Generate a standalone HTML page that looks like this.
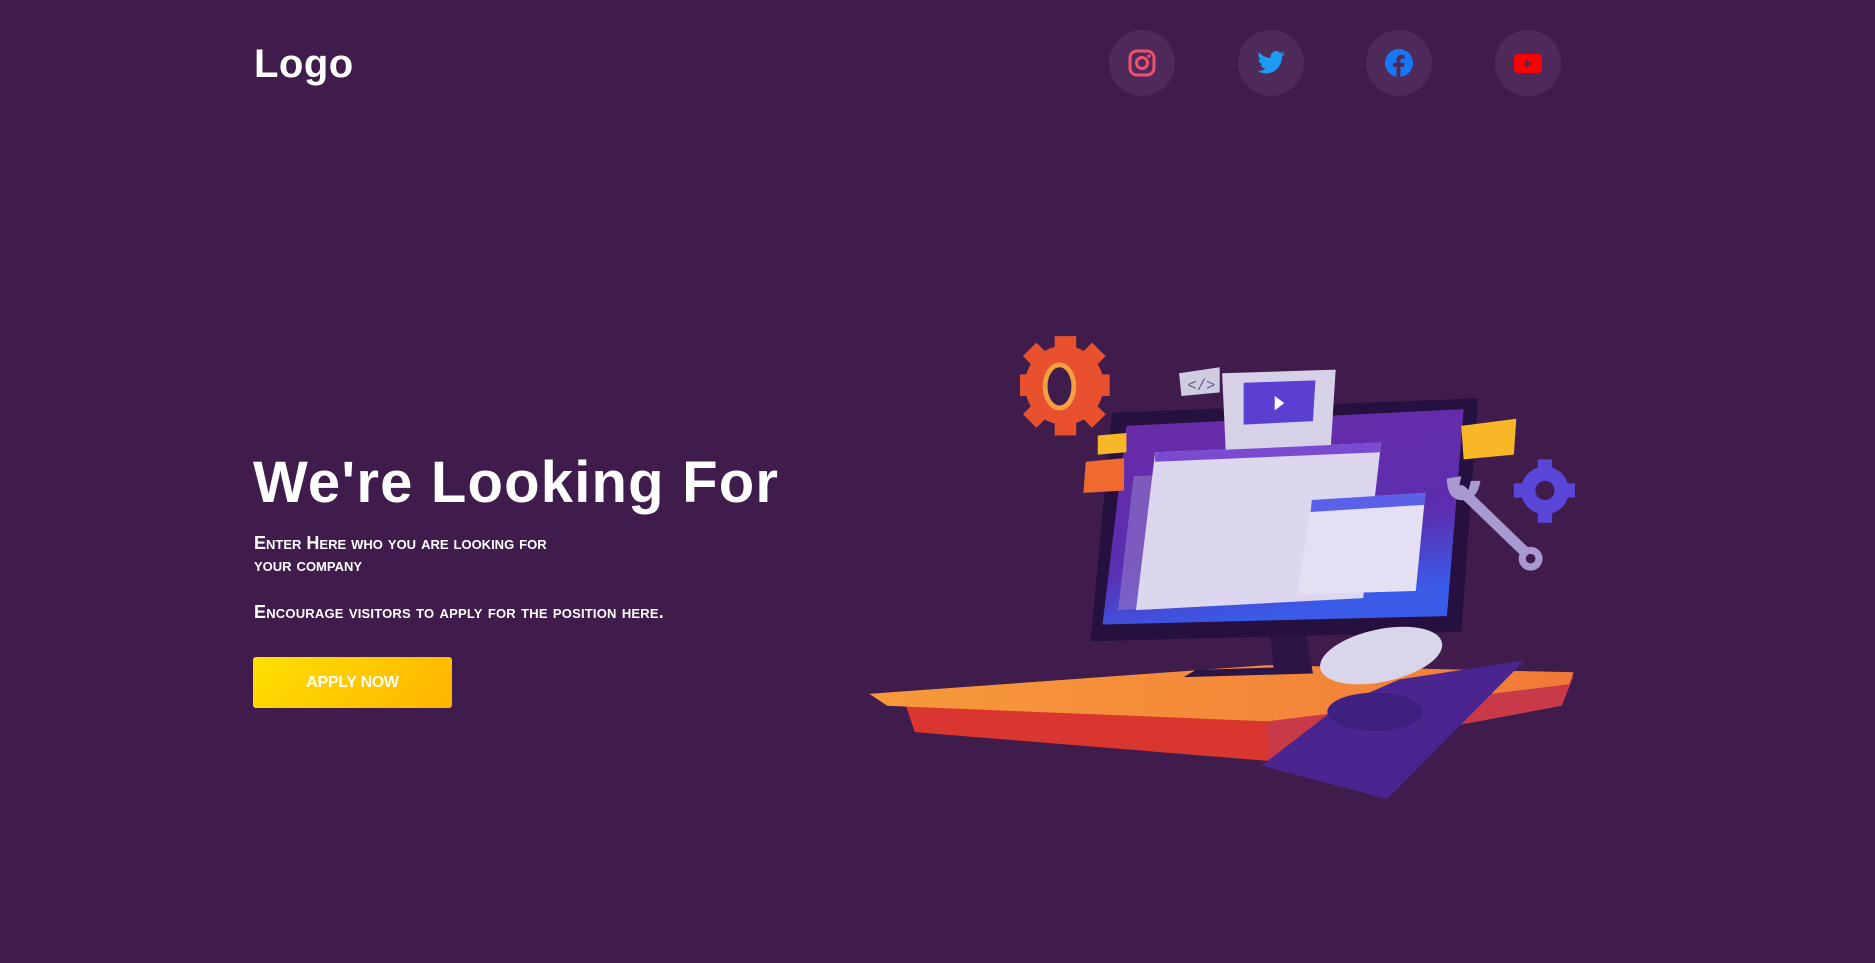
<!DOCTYPE html>
<html><head><meta charset="utf-8"><style>
html,body{margin:0;padding:0;width:1875px;height:963px;overflow:hidden;background:#3f1c4b;font-family:"Liberation Sans",sans-serif;color:#fff}
.logo{position:absolute;left:254px;top:42px;font-size:40px;font-weight:bold;letter-spacing:0.5px}
.soc{position:absolute;top:30px;width:66px;height:66px;border-radius:50%;background:#4e2a5a}
.soc svg{position:absolute;left:18px;top:18px;width:30px;height:30px}
h1{position:absolute;left:253px;top:449px;margin:0;font-size:58px;font-weight:bold;letter-spacing:1.2px;white-space:nowrap}
.sub{position:absolute;left:254px;top:532px;font-size:18px;font-weight:bold;font-variant:small-caps;line-height:22px;width:335px}
.enc{position:absolute;left:254px;top:602px;font-size:18px;font-variant:small-caps;font-weight:bold;letter-spacing:0.2px}
.btn{position:absolute;left:253px;top:657px;width:199px;height:51px;border-radius:3px;background:linear-gradient(135deg,#ffe000,#ffb300);font-size:16px;font-weight:bold;text-align:center;line-height:51px;letter-spacing:-0.3px}
.ill{position:absolute;left:0;top:0;width:1875px;height:963px}
</style></head><body>
<div class="logo">Logo</div>
<div class="soc" style="left:1109px"><svg viewBox="0 0 30 30"><rect x="3" y="3" width="24" height="24" rx="7" fill="none" stroke="#f0506e" stroke-width="3"/><circle cx="15" cy="15" r="5.5" fill="none" stroke="#f0506e" stroke-width="3"/><circle cx="22" cy="8" r="1.6" fill="#f0506e"/></svg></div>
<div class="soc" style="left:1238px"><svg viewBox="0 0 24 24"><path fill="#1d9bf0" d="M23 4.6c-.8.4-1.7.6-2.6.7.9-.6 1.6-1.4 2-2.5-.9.5-1.9.9-2.9 1.1A4.5 4.5 0 0 0 11.8 8 12.8 12.8 0 0 1 2.5 3.3a4.5 4.5 0 0 0 1.4 6c-.7 0-1.4-.2-2-.6 0 2.2 1.5 4 3.6 4.5-.7.2-1.4.2-2 .1.6 1.8 2.3 3.1 4.2 3.1A9 9 0 0 1 1 18.3 12.8 12.8 0 0 0 7.9 20.3c8.3 0 12.8-6.9 12.8-12.8v-.6c.9-.6 1.6-1.4 2.300-2.300z"/></svg></div>
<div class="soc" style="left:1366px"><svg viewBox="0 0 30 30"><circle cx="15" cy="15" r="14" fill="#1877f2"/><path fill="#4e2a5a" d="M16.5 30V19h3.5l.5-4h-4v-2.5c0-1.2.4-2 2-2h2.2V7c-.4-.1-1.7-.2-3.2-.2-3.1 0-5 1.900-5 5.300V15H9v4h3.5v11z"/></svg></div>
<div class="soc" style="left:1495px"><svg viewBox="0 0 30 30"><rect x="1" y="6" width="28" height="19" rx="4" fill="#ff0000"/><path d="M12 11v9l7-4.500z" fill="#4e2a5a"/></svg></div>
<h1>We're Looking For</h1>
<div class="sub">Enter Here who you are looking for your company</div>
<div class="enc">Encourage visitors to apply for the position here.</div>
<div class="btn">APPLY NOW</div>
<svg class="ill" viewBox="0 0 1568 805" preserveAspectRatio="none">
<defs><linearGradient id="scr" x1="0" y1="0" x2="0.3" y2="1"><stop offset="0" stop-color="#6b2aa5"/><stop offset="0.7" stop-color="#5a2fb0"/><stop offset="1" stop-color="#3a5ae8"/></linearGradient>
<linearGradient id="desk" x1="0" y1="0" x2="1" y2="0"><stop offset="0" stop-color="#f79a3a"/><stop offset="1" stop-color="#f07a38"/></linearGradient></defs>
<polygon points="757,588 1060,603 1060,636 765,612" fill="#d8362e"/>
<polygon points="1060,600 1316,565 1306,590 1060,636" fill="#c83a48"/>
<polygon points="727,580 1060,556 1316,562 1312,572 1060,603 742,590" fill="url(#desk)"/>
<polygon points="1055,640 1160,668 1275,552 1170,568 1120,590" fill="#4a2590"/>
<ellipse cx="1150" cy="595" rx="40" ry="16" fill="#3d2080"/>
<polygon points="1062,530 1092,530 1098,563 990,566 1000,560 1065,558" fill="#2c1446"/>
<polygon points="930,345 1236,333 1222,528 912,536" fill="#251040"/>
<polygon points="942,356 1224,342 1210,515 922,522" fill="url(#scr)"/>
<polygon points="948,398 1120,392 1105,500 935,510" fill="#8a6ec8" opacity="0.7"/>
<polygon points="966,378 1155,370 1140,500 950,510" fill="#dcd6ef"/>
<polygon points="966,378 1155,370 1154,378 966,386" fill="#7a4ad0"/>
<polygon points="1097,418 1192,412 1184,494 1085,497" fill="#e4dff3"/>
<polygon points="1097,418 1192,412 1191,422 1096,428" fill="#5a60e8"/>
<polygon points="1022,312 1117,309 1113,372 1025,376" fill="#d6d1e6"/>
<polygon points="1040,320 1100,318 1098,352 1040,355" fill="#5a3fd0"/>
<polygon points="1066,331 1074,337 1066,343" fill="#fff"/>
<polygon points="986,312 1020,307 1020,328 988,331" fill="#cfcbe0"/>
<text x="993" y="326" font-size="13" fill="#6a5a8a" font-family="Liberation Mono">&lt;/&gt;</text>
<circle cx="890" cy="322" r="33" fill="#e8502e"/>
<g fill="#e8502e"><rect x="882" y="281" width="18" height="14"/><rect x="882" y="350" width="18" height="14"/><rect x="853" y="313" width="14" height="18"/><rect x="914" y="313" width="14" height="18"/><rect x="858" y="290" width="16" height="14" transform="rotate(-45 866 297)"/><rect x="906" y="340" width="16" height="14" transform="rotate(-45 914 347)"/><rect x="906" y="290" width="16" height="14" transform="rotate(45 914 297)"/><rect x="858" y="340" width="16" height="14" transform="rotate(45 866 347)"/></g>
<ellipse cx="886" cy="323" rx="12" ry="18" fill="#3f1c4b" stroke="#f5a040" stroke-width="4"/>
<circle cx="1292" cy="410" r="20" fill="#5a46d8"/>
<g fill="#5a46d8"><rect x="1286" y="384" width="12" height="10"/><rect x="1286" y="427" width="12" height="10"/><rect x="1266" y="404" width="10" height="12"/><rect x="1307" y="404" width="10" height="12"/></g>
<circle cx="1292" cy="410" r="8" fill="#3f1c4b"/>
<line x1="1222" y1="410" x2="1278" y2="464" stroke="#a89ad0" stroke-width="9" stroke-linecap="round"/>
<circle cx="1280" cy="467" r="10" fill="#a89ad0"/><circle cx="1280" cy="467" r="4" fill="#3f1c4b"/>
<path d="M1210 400 q0 20 16 18 q10 -2 12 -16 l-8 0 l-2 8 l-8 -2 l2 -10z" fill="#a89ad0"/>
<polygon points="1222,356 1268,350 1266,380 1224,384" fill="#f7b726"/>
<polygon points="918,364 942,362 942,378 918,380" fill="#f7b726"/>
<polygon points="908,386 940,383 940,410 906,412" fill="#f06a30"/>
<ellipse cx="1155" cy="548" rx="52" ry="22" fill="#d9d5ea" transform="rotate(-12 1155 548)"/>
</svg>
</body></html>
